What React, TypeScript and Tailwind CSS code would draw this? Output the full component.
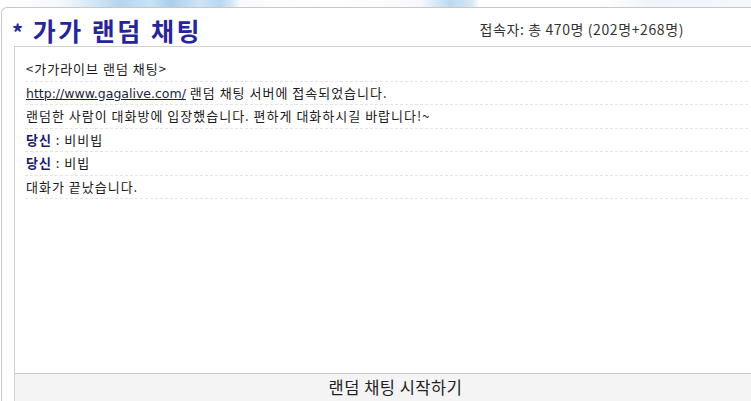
const KR = '"Noto Sans CJK KR", "Noto Sans", sans-serif';

type Line = { who?: string; text: string; link?: string };

const lines: Line[] = [
  { text: '<가가라이브 랜덤 채팅>' },
  { link: 'http://www.gagalive.com/', text: ' 랜덤 채팅 서버에 접속되었습니다.' },
  { text: '랜덤한 사람이 대화방에 입장했습니다. 편하게 대화하시길 바랍니다!~' },
  { who: '당신', text: ' : 비비빕' },
  { who: '당신', text: ' : 비빕' },
  { text: '대화가 끝났습니다.' },
];

function ChatRow({ line }: { line: Line }) {
  return (
    <div className="h-[23.5px] leading-[22.5px] ml-[10px] pl-[1px] border-b border-dashed border-[#e4e4e4] text-[13px] tracking-[1px] text-[#1a1a1a] whitespace-pre">
      {line.link && (
        <a
          href="#"
          className="underline text-[#1c1c3c] text-[12.5px] tracking-[0px]"
          style={{ fontFamily: '"DejaVu Sans", sans-serif' }}
        >
          {line.link}
        </a>
      )}
      {line.who && <span className="font-bold text-[#1c1c6c]">{line.who}</span>}
      {line.text}
    </div>
  );
}

export default function App() {
  return (
    <div className="w-[751px] h-[401px] bg-white overflow-hidden flex flex-col" style={{ fontFamily: KR }}>
      {/* decorative header strip */}
      <div className="h-[7px] shrink-0 bg-[linear-gradient(90deg,#ffffff_0px,#f4f8fc_60px,#cfe4f5_98px,#b4d6f0_120px,#c9e2f5_150px,#a9cfee_170px,#cfe4f5_200px,#b8d8f0_220px,#d8eaf7_233px,#f7fafd_240px,#ffffff_330px,#f6f9fc_420px,#bcd9f1_450px,#d5e8f6_472px,#ffffff_480px,#ffffff_600px,#eef5fb_650px,#f2f7fc_751px)]" />

      <div className="flex-1 flex flex-col ml-[1px] w-[780px] border-t border-l border-[#c8c8c8] rounded-tl-[6px]">
        <div className="h-[38px] shrink-0 flex justify-between items-start">
          <h1 className="mt-[9px] ml-[10px] text-[25px] leading-[27px] font-bold text-[#26269a] tracking-[2.5px]">
            <span className="text-[22px] mr-[7px]">*</span>가가 랜덤 채팅
          </h1>
          <div className="mt-[11px] mr-[97px] text-[14px] tracking-[0.6px] text-[#333]">
            접속자: 총 470명 (202명+268명)
          </div>
        </div>

        <div className="flex-1 ml-[12px] w-[762px] flex flex-col border-t border-l border-[#d0d0d0]">
          <div className="flex-1 pt-[11px] pr-[28px]">
            {lines.map((l, i) => (
              <ChatRow key={i} line={l} />
            ))}
          </div>
          <button className="h-[28px] shrink-0 bg-[#f4f4f4] border-t border-[#c8c8c8] text-[16.5px] text-[#222] tracking-[0.5px] flex items-center justify-center">
            랜덤 채팅 시작하기
          </button>
        </div>
      </div>
    </div>
  );
}
